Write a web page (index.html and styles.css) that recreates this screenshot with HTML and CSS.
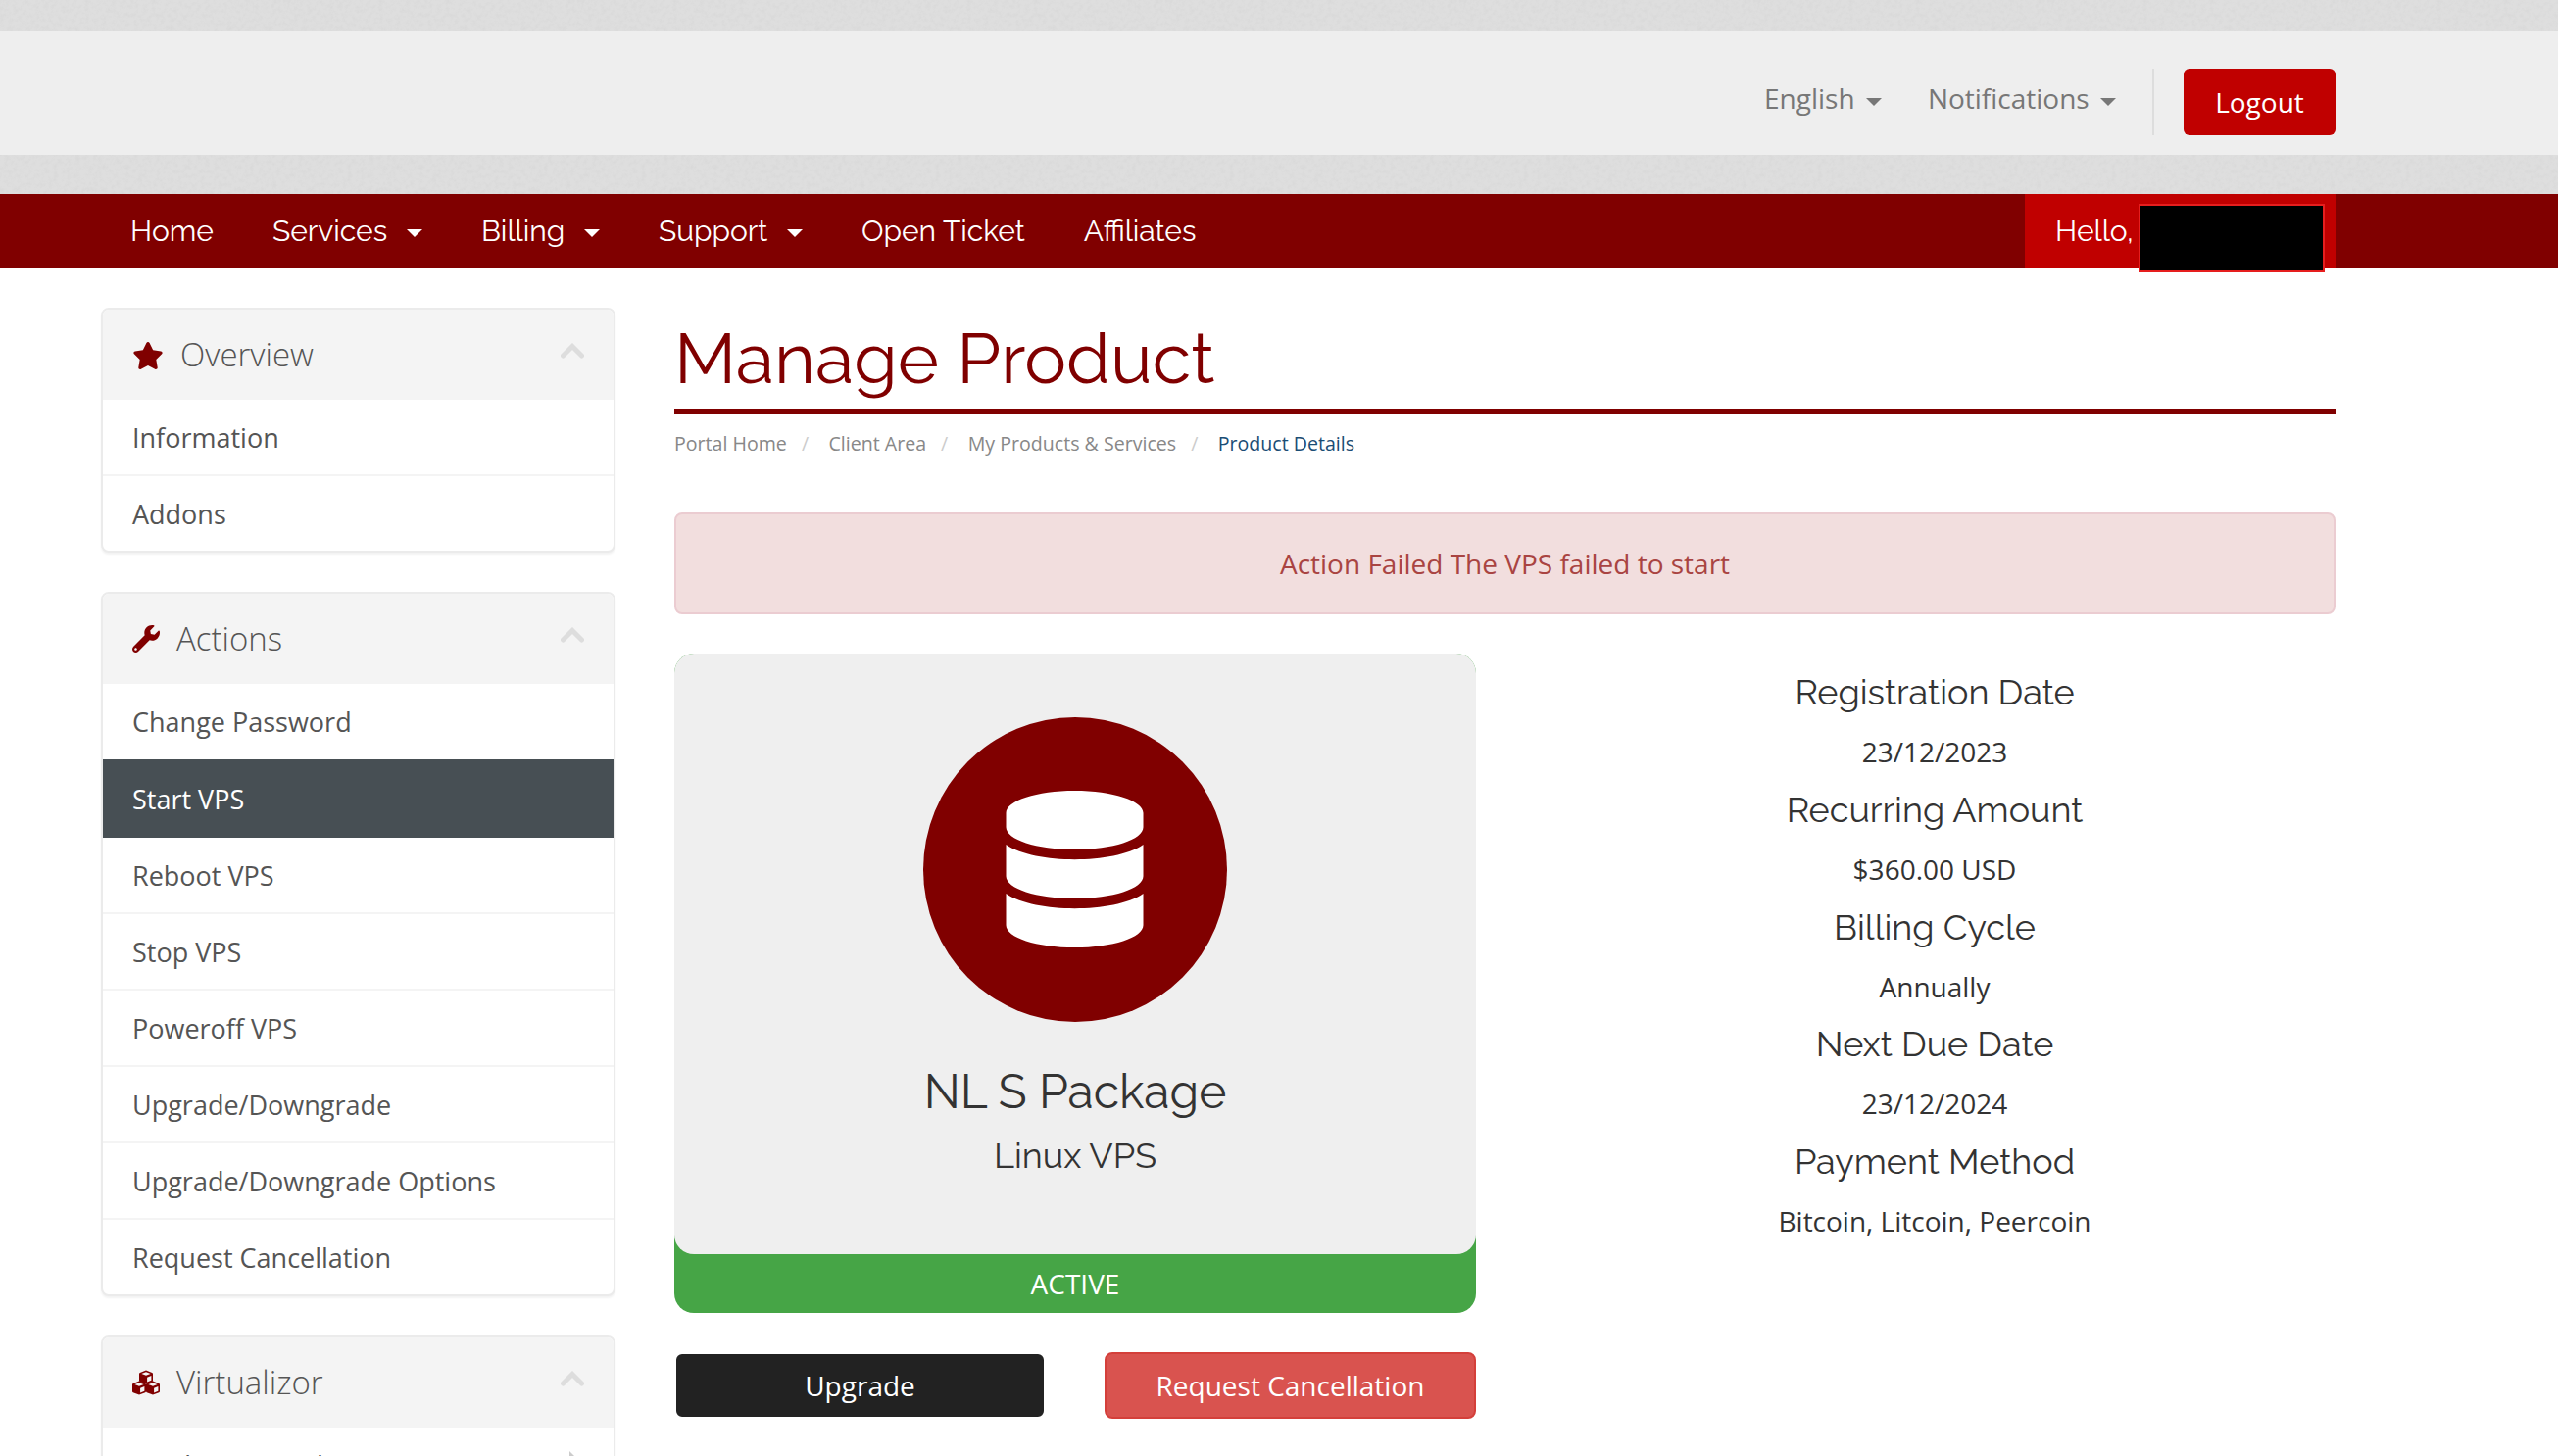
FILE: index.html
```
<!DOCTYPE html>
<html lang="en">
<head>
    <meta charset="UTF-8">
    <meta name="viewport" content="width=device-width, initial-scale=1.0">
    <title>Manage Product</title>
    <link rel="stylesheet" href="styles.css">
</head>
<body>

<header class="top">
    <div class="top-band">
        <div class="container top-nav">
            <a class="top-link">English <span class="caret"></span></a>
            <a class="top-link">Notifications <span class="caret"></span></a>
            <div class="logout-wrap"><a class="logout">Logout</a></div>
        </div>
    </div>
</header>

<nav class="main-menu">
    <div class="container menu-row">
        <a>Home</a>
        <a class="dropdown">Services <span class="caret"></span></a>
        <a class="dropdown">Billing <span class="caret"></span></a>
        <a class="dropdown">Support <span class="caret"></span></a>
        <a>Open Ticket</a>
        <a>Affiliates</a>
        <div class="account">Hello,<span class="account-name"></span></div>
    </div>
</nav>

<div class="container page">
    <aside class="sidebar">
        <div class="panel">
            <div class="panel-heading">
                <svg class="icon-star" viewBox="0 0 576 512"><path d="M259.3 17.8L194 150.2 47.9 171.5c-26.2 3.8-36.7 36.1-17.7 54.6l105.7 103-25 145.5c-4.5 26.3 23.2 46 46.4 33.7L288 439.6l130.7 68.7c23.2 12.2 50.9-7.4 46.4-33.7l-25-145.5 105.7-103c19-18.5 8.5-50.8-17.7-54.6L382 150.2 316.7 17.8c-11.7-23.6-45.6-23.9-57.4 0z"/></svg>
                <h3>Overview</h3>
                <svg class="chevron" viewBox="0 0 24 16"><path d="M2.5 13L12 3.5L21.5 13"/></svg>
            </div>
            <a class="item">Information</a>
            <a class="item">Addons</a>
        </div>

        <div class="panel">
            <div class="panel-heading">
                <svg class="icon" viewBox="0 0 512 512"><path d="M507.73 109.1c-2.24-9.03-13.54-12.09-20.12-5.51l-74.36 74.36-67.88-11.31-11.31-67.88 74.36-74.36c6.62-6.62 3.43-17.9-5.66-20.16-47.38-11.74-99.55.91-136.58 37.93-39.64 39.64-50.55 97.1-34.05 147.2L18.74 402.76c-24.99 24.99-24.99 65.51 0 90.5 24.99 24.99 65.51 24.99 90.5 0l213.21-213.21c50.12 16.71 107.47 5.68 147.37-34.22 37.07-37.07 49.7-89.32 37.91-136.73zM64 472c-13.25 0-24-10.75-24-24 0-13.26 10.75-24 24-24s24 10.74 24 24c0 13.25-10.75 24-24 24z"/></svg>
                <h3>Actions</h3>
                <svg class="chevron" viewBox="0 0 24 16"><path d="M2.5 13L12 3.5L21.5 13"/></svg>
            </div>
            <a class="item">Change Password</a>
            <a class="item active">Start VPS</a>
            <a class="item">Reboot VPS</a>
            <a class="item">Stop VPS</a>
            <a class="item">Poweroff VPS</a>
            <a class="item">Upgrade/Downgrade</a>
            <a class="item">Upgrade/Downgrade Options</a>
            <a class="item">Request Cancellation</a>
        </div>

        <div class="panel">
            <div class="panel-heading">
                <svg class="icon" viewBox="0 0 28 28">
                    <defs>
                        <g id="cube">
                            <path d="M7 0L13.2 2.4Q14 2.7 14 3.6V10.4Q14 11.3 13.2 11.7L7 14L.8 11.7Q0 11.3 0 10.4V3.6Q0 2.7 .8 2.4Z"/>
                            <path class="face" d="M7 1.8L11.6 3.5L7 5.2L2.4 3.5ZM8.1 7.2L12.4 5.6V10.3L8.1 12Z"/>
                        </g>
                    </defs>
                    <use href="#cube" x="7" y="1.5"/>
                    <use href="#cube" x="0" y="12.5"/>
                    <use href="#cube" x="14" y="12.5"/>
                </svg>
                <h3>Virtualizor</h3>
                <svg class="chevron" viewBox="0 0 24 16"><path d="M2.5 13L12 3.5L21.5 13"/></svg>
            </div>
            <a class="item item-sub">Enduser Panel <span class="arrow"></span></a>
        </div>
    </aside>

    <main class="content">
        <h1>Manage Product</h1>
        <ol class="breadcrumb">
            <li>Portal Home</li>
            <li>Client Area</li>
            <li>My Products &amp; Services</li>
            <li class="current">Product Details</li>
        </ol>

        <div class="alert">Action Failed The VPS failed to start</div>

        <div class="product">
            <div class="product-left">
                <div class="status-card">
                    <div class="product-card">
                        <div class="circle">
                            <svg viewBox="0 0 448 512"><path d="M448 73.143v45.714C448 159.143 347.667 192 224 192S0 159.143 0 118.857V73.143C0 32.857 100.333 0 224 0s224 32.857 224 73.143zM448 176v102.857C448 319.143 347.667 352 224 352S0 319.143 0 278.857V176c48.125 33.143 136.208 48.572 224 48.572S399.874 209.143 448 176zm0 160v102.857C448 479.143 347.667 512 224 512S0 479.143 0 438.857V336c48.125 33.143 136.208 48.572 224 48.572S399.874 369.143 448 336z"/></svg>
                        </div>
                        <h2>NL S Package</h2>
                        <h4>Linux VPS</h4>
                    </div>
                    <div class="status">ACTIVE</div>
                </div>
                <div class="buttons">
                    <a class="btn btn-upgrade">Upgrade</a>
                    <a class="btn btn-danger">Request Cancellation</a>
                </div>
            </div>
            <div class="product-right">
                <h4>Registration Date</h4>
                <p>23/12/2023</p>
                <h4>Recurring Amount</h4>
                <p>$360.00 USD</p>
                <h4>Billing Cycle</h4>
                <p>Annually</p>
                <h4>Next Due Date</h4>
                <p>23/12/2024</p>
                <h4>Payment Method</h4>
                <p>Bitcoin, Litcoin, Peercoin</p>
            </div>
        </div>
    </main>
</div>

</body>
</html>
```
FILE: styles.css
```
* {
    box-sizing: border-box;
}

html, body {
    height: 1486px;
    overflow: hidden;
}

body {
    margin: 0;
    background: #fff;
    color: #333;
    font-family: "Open Sans", "Noto Sans", sans-serif;
    font-size: 28px;
}

h1, h2, h3, h4, p, ol {
    margin: 0;
    padding: 0;
    font-weight: 400;
}

h1, h2, h4, .main-menu {
    font-family: Raleway, Lato, sans-serif;
}

.container {
    width: 2280px;
    margin-left: 103px;
}

.caret {
    display: inline-block;
    border-top: 8px solid;
    border-left: 8px solid transparent;
    border-right: 8px solid transparent;
    vertical-align: middle;
}

/* header */
.top {
    height: 198px;
    padding-top: 32px;
    background-color: #dedede;
    /* fine paper grain */
    background-image: url("data:image/svg+xml,%3Csvg xmlns='http://www.w3.org/2000/svg' width='300' height='300'%3E%3Cfilter id='n'%3E%3CfeTurbulence type='fractalNoise' baseFrequency='.22' numOctaves='3' stitchTiles='stitch'/%3E%3CfeColorMatrix values='0 0 0 0 .5 0 0 0 0 .5 0 0 0 0 .5 .3 0 0 0 -.12'/%3E%3C/filter%3E%3Crect width='300' height='300' filter='url(%23n)'/%3E%3C/svg%3E");
}

.top-band {
    height: 126px;
    padding-top: 38px;
    background: #eee;
}

.top-nav {
    display: flex;
    justify-content: flex-end;
}

.top-link {
    line-height: 60px;
    color: #777;
    margin-right: 47px;
}

.top-link + .top-link {
    margin-right: 37px;
}

.top-link .caret {
    margin-left: 4px;
}

.logout-wrap {
    border-left: 2px solid #ddd;
    padding-left: 30px;
}

.logout {
    display: block;
    width: 155px;
    line-height: 68px;
    border-radius: 6px;
    background: #c00000;
    color: #fff;
    text-align: center;
}

/* menu */
.main-menu {
    height: 76px;
    background: #800000;
    color: #fff;
    font-size: 30px;
    line-height: 76px;
}

.menu-row {
    display: flex;
}

.menu-row a {
    padding: 0 30px;
}

.dropdown .caret {
    margin-left: 12px;
}

.account {
    position: relative;
    width: 317px;
    margin-left: auto;
    padding-left: 31px;
    background: #c00000;
}

.account-name {
    position: absolute;
    top: 10px;
    left: 116px;
    width: 190px;
    height: 70px;
    background: #000;
    border: 2px solid #e61e1e;
}

/* sidebar */
.page {
    display: flex;
    justify-content: space-between;
    align-items: flex-start;
    padding-top: 40px;
}

.sidebar {
    width: 525px;
}

.panel {
    margin-bottom: 40px;
    border: 2px solid #ebebeb;
    border-radius: 8px;
    background: #fff;
    box-shadow: 0 2px 2px rgba(0, 0, 0, .05);
}

.panel-heading {
    display: flex;
    align-items: center;
    height: 92px;
    padding: 0 30px;
    background: #f4f4f4;
    border-radius: 6px 6px 0 0;
}

.panel-heading h3 {
    padding-bottom: 2px;
    color: #555;
    font-size: 33px;
    font-weight: 300;
}

.icon, .icon-star {
    width: 28px;
    height: 28px;
    margin-right: 17px;
    fill: #800000;
}

.icon-star {
    width: 32px;
    margin-top: 2px;
}

.face {
    fill: #f4f4f4;
}

.chevron {
    width: 24px;
    height: 16px;
    margin: -9px 0 0 auto;
    fill: none;
    stroke: #ddd;
    stroke-width: 5;
    stroke-linecap: round;
}

.item {
    display: block;
    height: 78px;
    padding: 0 30px;
    border-top: 2px solid #f4f4f4;
    color: #555;
    font-size: 27px;
    line-height: 77px;
}

.panel-heading + .item {
    height: 76px;
    border-top: 0;
}

.item.active {
    height: 80px;
    margin-top: 1px;
    border-color: #474f54;
    background: #474f54;
    color: #fff;
}

.item.active + .item {
    height: 76px;
    border-top: 0;
}

.item-sub {
    display: flex;
    justify-content: space-between;
    padding: 0 30px 0 41px;
    font-size: 27.5px;
    line-height: 78px;
}

.arrow {
    align-self: center;
    margin-right: 1px;
    border-left: 14px solid #ccc;
    border-top: 14px solid transparent;
    border-bottom: 14px solid transparent;
}

/* content */
.content {
    width: 1695px;
}

h1 {
    padding: 12px 0 11px;
    border-bottom: 6px solid #800000;
    color: #800000;
    font-size: 72px;
    line-height: 80px;
}

.breadcrumb {
    display: flex;
    margin: 16px 0 56px;
    list-style: none;
    color: #888;
    font-size: 19.6px;
    line-height: 28px;
}

.breadcrumb li + li::before {
    content: "/";
    padding: 0 20.4px 0 15px;
    color: #ccc;
}

.breadcrumb .current {
    color: #1a4d75;
}

.alert {
    height: 104px;
    border: 2px solid #ebccd1;
    border-radius: 8px;
    background: #f2dede;
    color: #a94442;
    line-height: 100px;
    text-align: center;
}

.product {
    display: flex;
    justify-content: space-between;
    margin-top: 40px;
    text-align: center;
}

.product-left, .product-right {
    width: 818px;
}

.status-card {
    border-radius: 20px;
    background: #46a546;
}

.product-card {
    display: flex;
    flex-direction: column;
    align-items: center;
    height: 613px;
    padding-top: 65px;
    border-radius: 20px;
    background: #efefef;
}

.circle {
    display: flex;
    align-items: center;
    justify-content: center;
    width: 310px;
    height: 311px;
    padding: 0 1px 1px 0;
    border-radius: 50%;
    background: #800000;
}

.circle svg {
    width: 141px;
    height: 160px;
    fill: #fff;
}

.product-card h2 {
    margin-top: 41px;
    font-size: 48px;
    line-height: 60px;
}

.product-card h4 {
    margin-top: 10px;
    font-size: 36px;
    line-height: 50px;
}

.status {
    color: #fff;
    line-height: 60px;
}

.buttons {
    display: grid;
    grid-template-columns: 1fr 1fr;
    gap: 60px;
    margin-top: 40px;
}

.btn {
    height: 68px;
    border: 2px solid;
    border-radius: 8px;
    color: #fff;
    line-height: 64px;
}

.btn-upgrade {
    border-color: #fff;
    background: #222;
}

.btn-danger {
    border-color: #d43f3a;
    background: #d9534f;
}

.product-right {
    padding-top: 19px;
}

.product-right h4 {
    font-size: 36px;
    line-height: 40px;
}

.product-right p {
    margin: 21px 0 18.8px;
    line-height: 40px;
}
```
